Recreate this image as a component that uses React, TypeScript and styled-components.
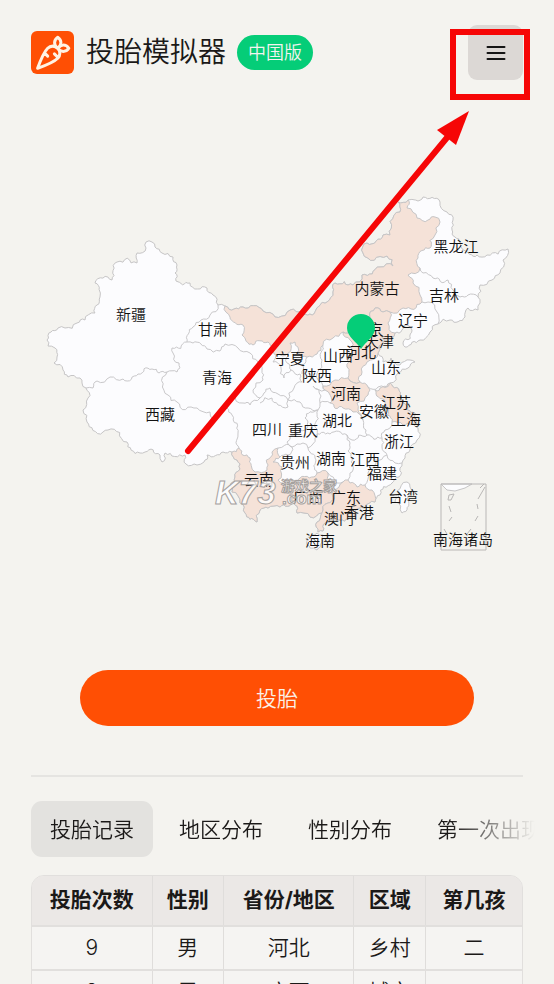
import React, { useState } from "react";
import styled, { createGlobalStyle } from "styled-components";
import { Carrot } from "lucide-react";

const GlobalStyle = createGlobalStyle`
  *, *::before, *::after { box-sizing: border-box; }
  body {
    margin: 0;
    background: #f4f3ef;
    color: #1b1918;
    font-family: Inter, "Noto Sans CJK SC", sans-serif;
    font-weight: 350;
  }
  button { font: inherit; color: inherit; border: 0; cursor: pointer; }
`;

const Page = styled.main`
  position: relative;
  height: 100vh;
  padding: 25px 31px 0;
  overflow: hidden auto;
  scrollbar-width: none;
`;

const Header = styled.header`
  display: flex;
  align-items: center;
  height: 55px;
`;

const Logo = styled.span`
  display: grid;
  place-items: center;
  width: 43px;
  height: 43px;
  border-radius: 6px;
  background: #ff4f04;
  color: #fff3e4;
`;

const Title = styled.h1`
  margin: 0 11px 0 12px;
  padding-bottom: 2px;
  font-size: 28px;
  line-height: 40px;
  font-weight: 350;
  white-space: nowrap;
`;

const Edition = styled.span`
  padding: 0 11px;
  border-radius: 18px;
  background: #05cd78;
  color: #f4f3ef;
  font-size: 18px;
  line-height: 35px;
  white-space: nowrap;
`;

const MenuButton = styled.button`
  display: grid;
  place-items: center;
  width: 55px;
  height: 55px;
  margin-left: auto;
  padding: 0;
  border-radius: 9px;
  background: #dcd8d5;
`;

const MapView = styled.svg`
  display: block;
  width: 100%;
  margin: 110px 0;
  overflow: visible;
`;

const Land = styled.path<{ $visited?: boolean }>`
  fill: ${(p) => (p.$visited ? "#f5e2d8" : "#fcfcfe")};
  stroke: #c6c5c6;
  stroke-width: 1;
  stroke-linejoin: round;
`;

const Border = styled.path`
  fill: none;
  stroke: #c9c8ca;
  stroke-width: 1;
`;

const PlaceName = styled.text`
  font-size: 15px;
  font-weight: 350;
  fill: #111;
  text-anchor: middle;
`;

const Watermark = styled.text<{ $size: number; $latin?: boolean }>`
  font-family: ${(p) => (p.$latin ? '"Liberation Sans"' : '"Noto Sans CJK SC"')}, sans-serif;
  font-size: ${(p) => p.$size}px;
  font-weight: 700;
  font-style: ${(p) => (p.$size > 20 ? "italic" : "normal")};
  fill: #ffffffd0;
  stroke: #a5a19e;
  stroke-width: 1;
`;

const DrawButton = styled.button`
  display: block;
  width: 80%;
  height: 56px;
  margin: 0 auto;
  padding: 0 0 2px;
  border-radius: 28px;
  background: #ff4f04;
  color: #fbf1e8;
  font-size: 21px;
`;

const Divider = styled.hr`
  height: 2px;
  margin: 49px 0 24px;
  border: 0;
  background: #e5e4e1;
`;

const Tabs = styled.div`
  display: flex;
  gap: 7px;
  margin-right: -16px;
  overflow: hidden;
  mask-image: linear-gradient(to right, #000 calc(100% - 90px), transparent calc(100% - 4px));
`;

const Tab = styled.button<{ $active: boolean }>`
  flex: none;
  height: 56px;
  padding: 0 19px 2px;
  border-radius: 11px;
  background: ${(p) => (p.$active ? "#e3e2df" : "transparent")};
  font-size: 21px;
`;

const TableFrame = styled.div`
  margin-top: 18px;
  border: 1px solid #e1dfdd;
  border-radius: 13px;
  overflow: hidden;
`;

const Table = styled.table`
  width: 100%;
  table-layout: fixed;
  border-collapse: collapse;
  text-align: center;
  font-size: 21px;
`;

const HeadCell = styled.th<{ $share: number }>`
  width: ${(p) => p.$share}%;
  height: 50px;
  padding: 0 0 1px;
  border-right: 1px solid #dfdddb;
  background: #ebe8e6;
  font-weight: 700;
  line-height: 30px;
  white-space: nowrap;
  &:last-child { border-right: 0; }
`;

const Cell = styled.td`
  height: 44px;
  padding: 0 0 1px;
  border-top: 2px solid #e1dfdd;
  border-right: 1px solid #dfdddb;
  background: #f5f4f2;
  line-height: 30px;
  &:last-child { border-right: 0; }
`;

const Highlight = styled.div`
  position: absolute;
  top: 29px;
  right: 24px;
  width: 80px;
  height: 71px;
  border: 6px solid #f60606;
  pointer-events: none;
`;

const Pointer = styled.svg`
  position: absolute;
  top: 110px;
  right: 84px;
  width: 286px;
  height: 346px;
  pointer-events: none;
`;

type Pt = [number, number];

const parse = (s: string): Pt[] =>
  s.trim().split(/\s+/).map((p) => p.split(",").map(Number) as Pt);

/* Breaks an edge into an uneven line; both directions of an edge give the same shape. */
function rough(a: Pt, b: Pt): Pt[] {
  const len = Math.hypot(b[0] - a[0], b[1] - a[1]);
  if (len < 4) return [b];
  const flip = a[0] > b[0] || (a[0] === b[0] && a[1] > b[1]);
  const seed = Math.sin((a[0] + b[0]) * 12.9898 + (a[1] + b[1]) * 78.233) * 43758.5453;
  const r = seed - Math.floor(seed);
  const size = 0.08 + 0.16 * ((r * 10) % 1);
  const k = (r < 0.5 ? -size : size) * (flip ? -1 : 1);
  const m: Pt = [
    (a[0] + b[0]) / 2 - (b[1] - a[1]) * k,
    (a[1] + b[1]) / 2 + (b[0] - a[0]) * k,
  ];
  return [...rough(a, m), ...rough(m, b)];
}

function outline(s: string, closed = true): string {
  const pts = parse(s);
  const all = closed ? [...pts, pts[0]] : pts;
  const out: Pt[] = [all[0]];
  for (let i = 1; i < all.length; i++) out.push(...rough(all[i - 1], all[i]));
  return "M" + out.map((p) => `${p[0].toFixed(1)} ${p[1].toFixed(1)}`).join("L") + (closed ? "Z" : "");
}

const mainland = `146,242 152,242 155,247 162,253 173,257 177,265 175,273 176,281 190,283 207,288 213,295 218,305 225,306
243,307 263,311 275,317 300,312 327,302 333,292 335,283 353,285 362,275 380,267 393,266 387,256 363,253 367,243 383,235 390,235
400,212 398,202 408,200 423,197 440,202 447,212 452,230 455,237 477,255 487,255 508,249 503,260 500,273 492,280 480,285 478,297
480,303 478,310 468,308 465,317 450,320 438,324 430,332 420,340 405,347 403,343 412,330 407,325 395,333 385,340 379,346 378,353
383,362 391,358 400,365 410,360 415,362 408,368 398,373 390,383 400,395 403,403 415,413 417,420 413,424 418,428 417,440 410,450
405,458 402,463 400,468 392,483 380,495 375,502 365,508 355,513 340,520 325,523 323,531 318,532 317,522 322,513 310,517 297,513
295,505 292,500 280,507 268,508 260,510 257,522 245,513 240,503 232,492 235,477 237,460 232,452 223,452 207,455 197,465 186,464
185,455 165,453 162,462 160,455 145,452 140,453 127,442 108,430 103,432 87,422 83,410 88,398 86,388 82,383 80,378 68,377 63,370
54,363 57,357 55,348 48,346 47,340 51,332 58,328 65,328 77,323 85,320 95,313 97,305 100,297 95,283 112,280 117,262 137,263
137,253 146,248`;

const visited = [
  `225,306 243,307 263,311 275,317 300,312 327,302 333,292 335,283 353,285 362,275 380,267 393,266 387,256 363,253 367,243
  383,235 390,235 400,212 398,202 408,200 407,208 417,218 428,220 435,217 440,222 435,235 430,248 418,258 420,268 408,275 413,283
  420,295 422,302 403,308 390,312 383,312 375,308 370,317 356,320 352,330 343,332 333,338 323,345 317,354 307,357 297,353 295,342
  290,343 288,353 276,355 268,342 253,345 242,335 243,325 230,317`,
  `375,308 383,312 390,312 388,323 395,333 385,340 379,346 378,353 367,362 362,372 360,382 348,378 347,367 352,350 350,340 343,332
  352,330 356,320 370,317`,
  `335,380 348,378 360,382 368,387 370,390 368,395 357,403 358,410 363,420 353,412 343,408 330,403 325,390 323,386`,
  `382,387 390,383 400,395 403,403 415,413 417,420 413,424 403,425 392,422 387,407 385,402 375,390`,
  `239,448 250,458 255,472 267,470 272,452 278,448 280,457 273,462 282,467 278,480 287,490 292,500 280,507 268,508 260,510 257,522
  245,513 240,503 232,492 235,477 237,460 232,452`,
  `287,490 288,480 300,478 317,473 328,473 330,483 333,490 328,503 322,513 310,517 297,513 295,505 292,500`,
  `333,490 343,482 348,480 350,483 357,487 365,485 372,490 375,502 365,508 355,513 340,520 325,523 323,531 318,532 317,522 322,513
  328,503`,
];

const borders = [
  "218,305 210,315 201,320 193,327 187,342 172,348 173,353 179,363 177,372 167,372 152,369 138,374 123,379 110,377 97,381 93,388 86,388",
  "167,372 168,395 177,402 197,408 210,412 213,419 221,413 227,408",
  "187,342 193,343 207,349 220,351 225,344 238,348 250,353 258,362 262,370 263,380 253,390 260,398 250,405 243,403 233,395 227,408 232,415 238,433 239,448",
  "276,355 273,362 281,368 284,378 291,370 287,363 288,353",
  "291,370 300,374 302,382 294,388 288,400 278,394 270,388 264,393 260,398",
  "307,357 302,365 302,374",
  "260,403 272,398 278,405 288,407 288,400 300,402 318,410 320,403 330,403",
  "323,345 322,360 323,386 325,390 313,386 321,396 320,403",
  "318,410 305,418 308,422 297,433 287,442 292,447 278,448",
  "318,410 315,427 315,438 308,448 303,443 292,447 288,455 280,457",
  "308,448 310,452 315,458 317,473",
  "315,438 330,434 347,435 352,440 367,435 382,438 385,430 392,422",
  "363,420 366,430 367,435",
  "347,435 350,443 352,458 350,473 348,480",
  "382,438 382,447 387,455 375,460 368,473 365,485",
  "387,455 395,463 402,463",
  "328,473 337,483 343,482",
  "368,387 378,387 390,383",
  "420,268 423,273 433,278 448,280 453,290 460,297 468,295 478,297",
  "422,302 428,302 437,312 438,324",
  "370,317 366,326 371,333 379,331 382,337 385,340",
];

const islands = [
  "312,535 317,533 323,535 322,542 317,550 310,548 307,541",
  "407,482 410,487 407,500 402,513 395,502 397,491",
];

const places: [string, number, number][] = [
  ["黑龙江", 456, 252], ["内蒙古", 377, 294], ["吉林", 444, 301], ["新疆", 131, 320], ["辽宁", 413, 326],
  ["甘肃", 213, 335], ["北京", 368, 335], ["天津", 379, 347], ["宁夏", 290, 364], ["山西", 338, 361],
  ["山东", 386, 373], ["陕西", 317, 381], ["青海", 217, 383], ["河南", 346, 399], ["江苏", 396, 408],
  ["安徽", 374, 417], ["西藏", 160, 420], ["上海", 406, 425], ["湖北", 337, 426], ["四川", 267, 435],
  ["重庆", 303, 436], ["浙江", 399, 447], ["湖南", 331, 464], ["江西", 365, 465], ["贵州", 295, 468],
  ["福建", 382, 479], ["云南", 259, 485], ["广西", 308, 502], ["广东", 346, 503], ["台湾", 403, 502],
  ["香港", 359, 518], ["澳门", 339, 524], ["海南", 320, 546], ["南海诸岛", 463, 545],
];

function ChinaMap() {
  return (
    <MapView viewBox="31 190 492 370" role="img" aria-label="中国地图">
      <Land d={outline(mainland)} />
      {islands.map((s) => <Land key={s} d={outline(s)} />)}
      {visited.map((s) => <Land key={s} $visited d={outline(s)} />)}
      {borders.map((s) => <Border key={s} d={outline(s, false)} />)}
      <Land d="M441 484H472L465 488L455 491L447 490Z" />
      <path
        d="M441 484H486V550H441ZM484 484L480 488M485 487L478 499M449 495L454 494L451 500L448 500ZM449 506L451 512M452 517L449 521M444 529L447 534M477 504L478 509M478 516L475 521M471 529L467 534"
        fill="none" stroke="#b9b7b6"
      />
      {places.map(([name, x, y]) => <PlaceName key={name} x={x} y={y}>{name}</PlaceName>)}
      <path d="M361 349C357 342 347 337 347 328A14 14 0 0 1 375 328C375 337 365 342 361 349Z" fill="#05cd78" />
      <PlaceName x={361} y={358}>河北</PlaceName>
      <Watermark $size={33} $latin x={215} y={504}>K73</Watermark>
      <Watermark $size={14} x={281} y={491}>游戏之家</Watermark>
      <Watermark $size={17} $latin x={282} y={504}>.com</Watermark>
    </MapView>
  );
}

const tabs = ["投胎记录", "地区分布", "性别分布", "第一次出现"];
const columns: [string, number][] = [
  ["投胎次数", 24.5], ["性别", 14.6], ["省份/地区", 26.6], ["区域", 14.6], ["第几孩", 19.7],
];
const records = [
  ["9", "男", "河北", "乡村", "二"],
  ["8", "男", "广西", "城市", "一"],
];

export default function App() {
  const [active, setActive] = useState(0);
  return (
    <Page>
      <GlobalStyle />
      <Header>
        <Logo><Carrot size={38} strokeWidth={1.9} /></Logo>
        <Title>投胎模拟器</Title>
        <Edition>中国版</Edition>
        <MenuButton type="button" aria-label="菜单">
          <svg width="20" height="16" viewBox="0 0 20 16" stroke="#151515" strokeWidth="2" strokeLinecap="round">
            <path d="M1.500 2H18.500M1.500 8H18.500M1.500 14H18.500" />
          </svg>
        </MenuButton>
      </Header>
      <ChinaMap />
      <DrawButton type="button">投胎</DrawButton>
      <Divider />
      <Tabs role="tablist">
        {tabs.map((t, i) => (
          <Tab key={t} type="button" role="tab" aria-selected={i === active} $active={i === active} onClick={() => setActive(i)}>
            {t}
          </Tab>
        ))}
      </Tabs>
      <TableFrame>
        <Table>
          <thead>
            <tr>{columns.map(([c, w]) => <HeadCell key={c} scope="col" $share={w}>{c}</HeadCell>)}</tr>
          </thead>
          <tbody>
            {records.map((r) => (
              <tr key={r[0]}>{r.map((v, i) => <Cell key={i}>{v}</Cell>)}</tr>
            ))}
          </tbody>
        </Table>
      </TableFrame>
      <Highlight />
      <Pointer viewBox="184 110 286 346" aria-hidden="true">
        <path d="M188 451L450 134" stroke="#f60606" strokeWidth="6" strokeLinecap="round" />
        <path d="M469 111L437 130L456 145Z" fill="#f60606" />
      </Pointer>
    </Page>
  );
}
